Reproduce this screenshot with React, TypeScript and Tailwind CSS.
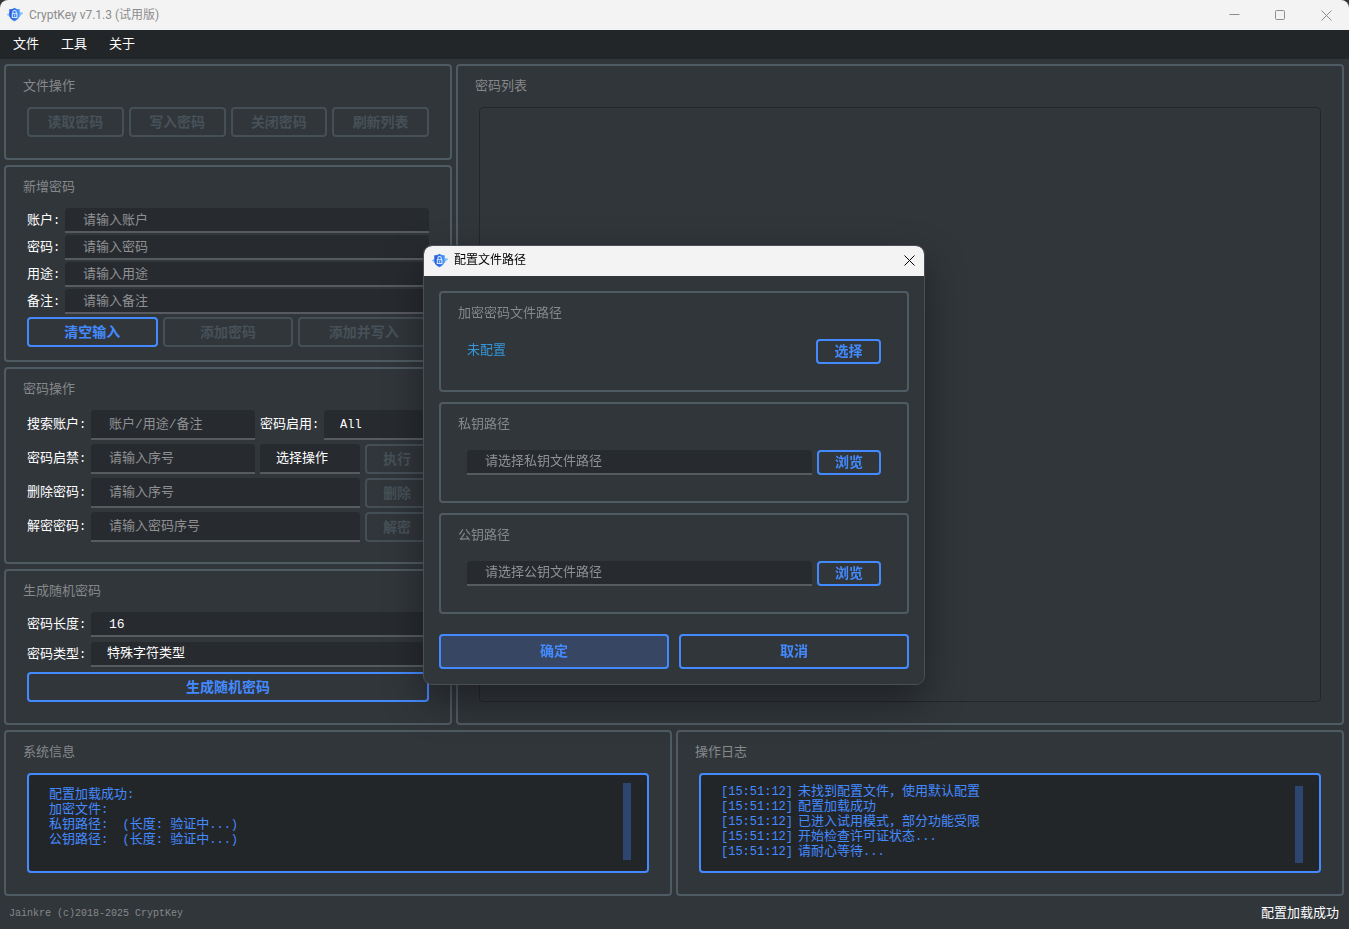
import type { ButtonHTMLAttributes, InputHTMLAttributes, ReactNode, SelectHTMLAttributes } from "react";
import { clsx } from "clsx";

function ShieldIcon() {
  return (
    <svg viewBox="0 0 16 16" className="size-4 shrink-0" aria-hidden="true">
      <defs>
        <linearGradient id="shield" x1="0" y1="0" x2="1" y2="0">
          <stop offset="0" stopColor="#2258d8" />
          <stop offset="1" stopColor="#4a97f7" />
        </linearGradient>
      </defs>
      <path d="M0 7.500 3 6.200v3.600L1.800 8.800zM16 6.200 12.500 5.200v4.600L14 7.600z" fill="#7fc0fb" stroke="#8cc6fb" strokeWidth=".8" />
      <path d="M7.500.7c1.500 1.100 3.300 1.500 5.200 1.500v5.200c0 3.200-1.800 5.400-5.200 6.800-3.400-1.400-5.200-3.600-5.200-6.800V2.200C4.200 2.200 6 1.800 7.500.7z" fill="url(#shield)" />
      <path d="M5.900 6.500V5.200c0-1 .7-1.700 1.700-1.700s1.700.7 1.700 1.700v1.300M5.300 6.800h4.600v3.700H5.300z" fill="none" stroke="#d6e7ff" strokeWidth="1.100" />
      <path d="M7.600 8v1.500" stroke="#d6e7ff" />
    </svg>
  );
}

function CloseGlyph() {
  return (
    <svg viewBox="0 0 11 11" className="size-[11px]" fill="none" stroke="currentColor" aria-hidden="true">
      <path d="M.5.5l10 10M10.500.5l-10 10" />
    </svg>
  );
}

function Panel({ title, className, children }: { title: string; className?: string; children: ReactNode }) {
  return (
    <section className={clsx("flex flex-col rounded border-2 border-[#4f5b62] px-[17px] pt-[11px]", className)}>
      <h2 className="mb-[10px] h-5 text-[13px] leading-5 text-[#86888a]">{title}</h2>
      {children}
    </section>
  );
}

function Field({ className, ...rest }: InputHTMLAttributes<HTMLInputElement>) {
  return (
    <input
      className={clsx(
        "min-w-0 rounded-t border-b-2 border-[#575b60] bg-[#272a2f] pt-px pl-[18px] text-[13px] text-white outline-none placeholder:text-[#8f9193]",
        className,
      )}
      {...rest}
    />
  );
}

function Drop({ className, ...rest }: SelectHTMLAttributes<HTMLSelectElement>) {
  return (
    <select
      className={clsx("min-w-0 appearance-none rounded-t border-b-2 border-[#575b60] bg-[#272a2f] pt-px pl-4 text-white outline-none", className)}
      {...rest}
    />
  );
}

function Btn({ className, ...rest }: ButtonHTMLAttributes<HTMLButtonElement>) {
  return (
    <button
      type="button"
      className={clsx(
        "rounded border-2 border-[#448aff] pt-[2px] text-sm leading-5 font-bold text-[#448aff] disabled:border-[#444f56] disabled:text-[#465158]",
        className,
      )}
      {...rest}
    />
  );
}

// Latin runs are set in a narrower monospace beside the Chinese glyphs.
function Mixed({ text }: { text: string }) {
  return (
    <>
      {text.split(/([\x20-\x7e]+)/).map((part, i) =>
        i % 2 ? (
          <span key={i} className="text-xs leading-none">
            {part}
          </span>
        ) : (
          part
        ),
      )}
    </>
  );
}

const newFields = [
  { id: "account", label: "账户:", hint: "请输入账户" },
  { id: "password", label: "密码:", hint: "请输入密码" },
  { id: "usage", label: "用途:", hint: "请输入用途" },
  { id: "remark", label: "备注:", hint: "请输入备注" },
];

const info = ["配置加载成功:", "加密文件:", "私钥路径:  (长度: 验证中...)", "公钥路径:  (长度: 验证中...)"];
const logs = ["未找到配置文件，使用默认配置", "配置加载成功", "已进入试用模式，部分功能受限", "开始检查许可证状态...", "请耐心等待..."];

function Dialog() {
  return (
    <div className="fixed inset-0 flex items-center justify-center pr-px">
      <div
        role="dialog"
        aria-labelledby="dialog-title"
        className="w-[500px] overflow-hidden rounded-lg bg-[#31363b] shadow-[0_16px_40px_rgba(0,0,0,0.4)] outline outline-[#4b4e52]"
      >
        <header className="flex h-[30px] items-center bg-[#f3f3f3] pl-2 text-black">
          <ShieldIcon />
          <h1 id="dialog-title" className="ml-[6px] flex-1 text-xs leading-5">
            配置文件路径
          </h1>
          <button type="button" aria-label="关闭" className="flex h-full w-[30px] items-center justify-center">
            <CloseGlyph />
          </button>
        </header>
        <div className="flex flex-col gap-[10px] p-[15px]">
          <Panel title="加密密码文件路径" className="pb-[26px]">
            <div className="mt-[5px] flex items-center justify-between px-[9px]">
              <span className="text-[13px] leading-5 text-[#3498db]">未配置</span>
              <Btn className="h-[25px] w-[65px] leading-none">选择</Btn>
            </div>
          </Panel>
          <Panel title="私钥路径" className="pb-[26px]">
            <div className="mt-[5px] flex gap-[5px] px-[9px]">
              <Field aria-label="私钥路径" placeholder="请选择私钥文件路径" className="h-[25px] flex-1" />
              <Btn className="h-[25px] w-16 leading-none">浏览</Btn>
            </div>
          </Panel>
          <Panel title="公钥路径" className="pb-[26px]">
            <div className="mt-[5px] flex gap-[5px] px-[9px]">
              <Field aria-label="公钥路径" placeholder="请选择公钥文件路径" className="h-[25px] flex-1" />
              <Btn className="h-[25px] w-16 leading-none">浏览</Btn>
            </div>
          </Panel>
          <div className="mt-[10px] flex gap-[10px]">
            <Btn className="h-[35px] flex-1 bg-[#374763]">确定</Btn>
            <Btn className="h-[35px] flex-1">取消</Btn>
          </div>
        </div>
      </div>
    </div>
  );
}

export default function App() {
  return (
    <div className="flex min-h-screen flex-col bg-[#31363b] font-['Liberation_Mono','Noto_Sans_CJK_SC',monospace] text-[13px] text-white">
      <header className="flex h-[30px] items-center rounded-t-lg bg-[#f3f3f3] pl-[7px] text-[#8c8c8c]">
        <ShieldIcon />
        <h1 className="ml-[6px] flex-1 font-['Roboto','Noto_Sans_CJK_SC',sans-serif] text-xs leading-5">CryptKey v7.1.3 (试用版)</h1>
        <button type="button" aria-label="最小化" className="flex h-full w-[46px] items-center justify-center">
          <svg viewBox="0 0 11 11" className="size-[11px]" fill="none" stroke="currentColor" aria-hidden="true">
            <path d="M.5 4.500h10" />
          </svg>
        </button>
        <button type="button" aria-label="最大化" className="flex h-full w-[46px] items-center justify-center">
          <svg viewBox="0 0 11 11" className="size-[11px]" fill="none" stroke="currentColor" aria-hidden="true">
            <rect x=".5" y=".5" width="9" height="9" rx="1" />
          </svg>
        </button>
        <button type="button" aria-label="关闭" className="flex h-full w-[46px] items-center justify-center">
          <CloseGlyph />
        </button>
      </header>

      <nav className="flex h-[29px] items-center gap-[22px] bg-[#232629] pl-[13px] leading-5">
        <button type="button">文件</button>
        <button type="button">工具</button>
        <button type="button">关于</button>
      </nav>

      <main className="flex flex-1 flex-col gap-[5px] pt-[5px] pr-[5px] pl-1">
        <div className="flex flex-1 gap-1">
          <div className="flex w-[448px] shrink-0 flex-col gap-[5px]">
            <Panel title="文件操作" className="pb-[21px]">
              <div className="flex gap-[5px] px-1">
                <Btn disabled className="h-[30px] flex-1">读取密码</Btn>
                <Btn disabled className="h-[30px] flex-1">写入密码</Btn>
                <Btn disabled className="h-[30px] flex-1">关闭密码</Btn>
                <Btn disabled className="h-[30px] flex-1">刷新列表</Btn>
              </div>
            </Panel>

            <Panel title="新增密码" className="pb-[13px]">
              <div className="flex flex-col gap-[2px] px-1">
                {newFields.map((f) => (
                  <div key={f.id} className="flex items-center">
                    <label htmlFor={f.id} className="w-[38px] shrink-0 leading-5 whitespace-nowrap">
                      <Mixed text={f.label} />
                    </label>
                    <Field id={f.id} placeholder={f.hint} className="h-[25px] flex-1" />
                  </div>
                ))}
              </div>
              <div className="mt-[3px] flex gap-[5px] px-1">
                <Btn className="h-[30px] flex-1">清空输入</Btn>
                <Btn disabled className="h-[30px] flex-1">添加密码</Btn>
                <Btn disabled className="h-[30px] flex-1">添加并写入</Btn>
              </div>
            </Panel>

            <Panel title="密码操作" className="pb-5">
              <div className="flex flex-col gap-1 px-1 leading-5">
                <div className="flex items-center">
                  <label htmlFor="search" className="w-16 shrink-0 whitespace-nowrap"><Mixed text="搜索账户:" /></label>
                  <Field id="search" placeholder="账户/用途/备注" className="mr-[5px] h-[30px] w-[164px]" />
                  <label htmlFor="enabled" className="w-16 shrink-0 whitespace-nowrap"><Mixed text="密码启用:" /></label>
                  <Drop id="enabled" className="h-[30px] flex-1 text-xs"><option>All</option></Drop>
                </div>
                <div className="flex items-center">
                  <label htmlFor="toggle" className="w-16 shrink-0 whitespace-nowrap"><Mixed text="密码启禁:" /></label>
                  <Field id="toggle" placeholder="请输入序号" className="mr-[5px] h-[30px] w-[164px]" />
                  <Drop aria-label="选择操作" className="mr-[5px] h-[30px] w-[100px]"><option>选择操作</option></Drop>
                  <Btn disabled className="h-[30px] flex-1">执行</Btn>
                </div>
                <div className="flex items-center">
                  <label htmlFor="remove" className="w-16 shrink-0 whitespace-nowrap"><Mixed text="删除密码:" /></label>
                  <Field id="remove" placeholder="请输入序号" className="mr-[5px] h-[30px] w-[269px]" />
                  <Btn disabled className="h-[30px] flex-1">删除</Btn>
                </div>
                <div className="flex items-center">
                  <label htmlFor="decrypt" className="w-16 shrink-0 whitespace-nowrap"><Mixed text="解密密码:" /></label>
                  <Field id="decrypt" placeholder="请输入密码序号" className="mr-[5px] h-[30px] w-[269px]" />
                  <Btn disabled className="h-[30px] flex-1">解密</Btn>
                </div>
              </div>
            </Panel>

            <Panel title="生成随机密码" className="pb-[21px]">
              <div className="flex flex-col gap-[5px] px-1 leading-5">
                <div className="flex items-center">
                  <label htmlFor="length" className="w-16 shrink-0 whitespace-nowrap"><Mixed text="密码长度:" /></label>
                  <Field id="length" defaultValue="16" className="h-[25px] flex-1" />
                </div>
                <div className="flex items-center">
                  <label htmlFor="kind" className="w-16 shrink-0 whitespace-nowrap"><Mixed text="密码类型:" /></label>
                  <Drop id="kind" className="h-[25px] flex-1"><option>特殊字符类型</option></Drop>
                </div>
                <Btn className="h-[30px]">生成随机密码</Btn>
              </div>
            </Panel>
          </div>

          <Panel title="密码列表" className="min-w-0 flex-1 pb-[21px]">
            <div className="mx-1 flex-1 rounded border border-[#24272a]" />
          </Panel>
        </div>

        <div className="flex gap-1">
          <Panel title="系统信息" className="min-w-0 flex-1 pb-[21px]">
            <div className="mx-1 flex h-[100px] justify-between rounded border-2 border-[#448aff] bg-[#232629] pt-2 pr-4 pl-5 text-[#448aff]">
              <div className="pt-1 leading-[15px] whitespace-pre">
                {info.map((line) => (
                  <p key={line} className="h-[15px]"><Mixed text={line} /></p>
                ))}
              </div>
              <div className="h-[77px] w-2 bg-[#2c4670]" />
            </div>
          </Panel>
          <Panel title="操作日志" className="min-w-0 flex-1 pb-[21px]">
            <div role="log" className="mx-1 flex h-[100px] justify-between rounded border-2 border-[#448aff] bg-[#232629] pt-2 pr-4 pl-5 text-[#448aff]">
              <div className="pt-px leading-[15px] whitespace-pre">
                {logs.map((line) => (
                  <p key={line} className="flex h-[15px] items-baseline">
                    <time className="w-[77px] shrink-0 text-xs leading-[15px]">[15:51:12]</time>
                    <span><Mixed text={line} /></span>
                  </p>
                ))}
              </div>
              <div className="mt-[3px] h-[77px] w-2 bg-[#2c4670]" />
            </div>
          </Panel>
        </div>
      </main>

      <footer className="flex h-[33px] items-center justify-between pt-[2px] pr-[10px] pl-[9px] leading-5">
        <span className="text-[10px] text-[#86888a]">Jainkre (c)2018-2025 CryptKey</span>
        <span>配置加载成功</span>
      </footer>

      <Dialog />
    </div>
  );
}
